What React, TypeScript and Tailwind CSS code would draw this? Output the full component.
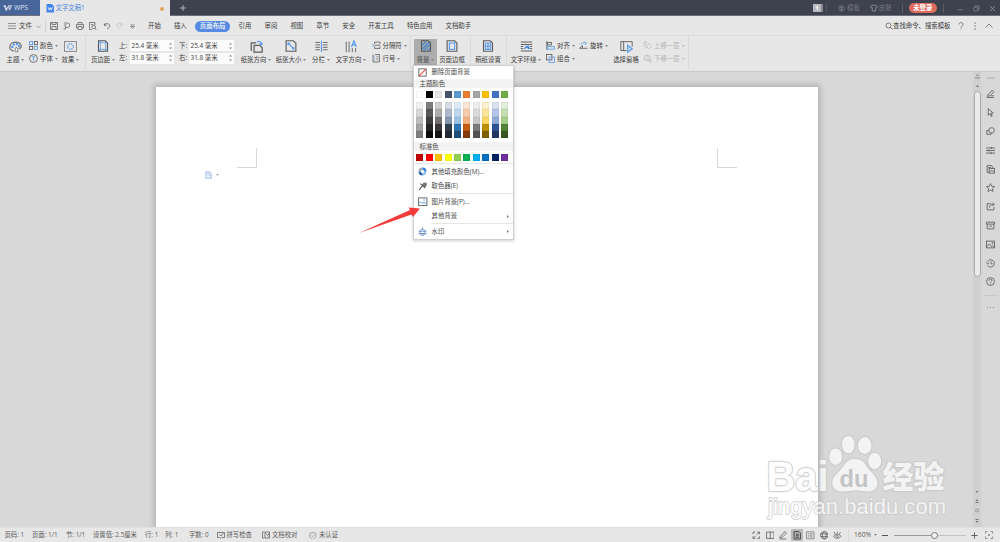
import React from "react";

type IconProps = { className?: string; children: React.ReactNode };

const Icon = ({ className = "size-[9px]", children }: IconProps) => (
  <svg viewBox="0 0 16 16" fill="none" stroke="#5c5c5c" strokeWidth="1.5" className={`shrink-0 ${className}`}>
    {children}
  </svg>
);

const BLUE = "#5b9bea";

const Caret = ({ className = "text-[#888]" }: { className?: string }) => (
  <svg viewBox="0 0 6 4" className={`ml-[2px] h-[2px] w-[3px] shrink-0 ${className}`}>
    <path d="M0 0H6L3 4Z" fill="currentColor" />
  </svg>
);

const Sep = ({ className = "" }: { className?: string }) => (
  <div className={`h-[34px] w-px shrink-0 bg-[#dadada] ${className}`} />
);

type BigProps = { label: string; caret?: boolean; className: string; children: React.ReactNode };

const Big = ({ label, caret, className, children }: BigProps) => (
  <div className={`flex h-[27px] shrink-0 flex-col items-center justify-between pt-px ${className}`}>
    {children}
    <div className="flex h-[11px] items-center">
      {label}
      {caret && <Caret />}
    </div>
  </div>
);

type SmallProps = { label: string; className?: string; children: React.ReactNode };

const Small = ({ label, className = "", children }: SmallProps) => (
  <div className={`flex h-[13px] items-center ${className}`}>
    {children}
    <span className="ml-[2px] pt-[0.500px]">{label}</span>
    <Caret className={className ? "text-[#bbb]" : "text-[#888]"} />
  </div>
);

const Margin = ({ label, value, narrow }: { label: string; value: string; narrow?: boolean }) => (
  <div className="flex h-[12px] items-center justify-between">
    <span>{label}</span>
    <div
      className={`flex h-[11px] items-center justify-between bg-[#fbfbfb] pr-[2px] pl-[1.500px] ${narrow ? "w-[44px]" : "w-[45px]"}`}
    >
      <span>{value}</span>
      <svg viewBox="0 0 4 10" className="h-[8px] w-[3px]" fill="#888">
        <path d="M0 3L2 0.6L4 3ZM0 7L2 9.4L4 7Z" />
      </svg>
    </div>
  </div>
);

const themeTop = ["#ffffff", "#000000", "#e7e6e6", "#44546a", "#5b9bd5", "#ed7d31", "#a5a5a5", "#ffc000", "#4472c4", "#70ad47"];
const themeShades = [
  ["#f2f2f2", "#7f7f7f", "#d0cece", "#d6dce4", "#deebf6", "#fbe5d5", "#ededed", "#fff2cc", "#d9e2f3", "#e2efd9"],
  ["#d8d8d8", "#595959", "#aeabab", "#adb9ca", "#bdd7ee", "#f7cbac", "#dbdbdb", "#fee599", "#b4c6e7", "#c5e0b3"],
  ["#bfbfbf", "#3f3f3f", "#757070", "#8496b0", "#9cc3e5", "#f4b183", "#c9c9c9", "#ffd965", "#8eaadb", "#a8d08d"],
  ["#a5a5a5", "#262626", "#3a3838", "#323f4f", "#2e75b5", "#c55a11", "#7b7b7b", "#bf9000", "#2f5496", "#538135"],
  ["#7f7f7f", "#0c0c0c", "#171616", "#222a35", "#1e4e79", "#833c0b", "#525252", "#7f6000", "#1f3864", "#375623"],
];
const standard = ["#c00000", "#ff0000", "#ffc000", "#ffff00", "#92d050", "#00b050", "#00b0f0", "#0070c0", "#002060", "#7030a0"];

const Swatches = ({ colors, className }: { colors: string[]; className: string }) => (
  <div className={`flex gap-[2.4px] pl-[2.400px] ${className}`}>
    {colors.map((c, i) => (
      <div
        key={i}
        className="w-[7px] shrink-0 border border-black/5"
        style={{ backgroundColor: c }}
      />
    ))}
  </div>
);

const MenuItem = ({ label, arrow, className, children }: { label: string; arrow?: boolean; className: string; children?: React.ReactNode }) => (
  <div className={`flex shrink-0 items-center pr-[4px] pl-[4px] ${className}`}>
    <div className="flex w-[13.500px] items-center">{children}</div>
    <span className="grow">{label}</span>
    {arrow && (
      <svg viewBox="0 0 4 6" className="h-[3px] w-[2px]">
        <path d="M0 0L4 3L0 6Z" fill="#777" />
      </svg>
    )}
  </div>
);

const BackgroundMenu = () => (
  <div className="absolute top-[65px] left-[413px] flex h-[174.500px] w-[101px] flex-col border border-[#cfcfcf] bg-white text-[6.400px] text-[#444] shadow-[0_1px_3px_rgba(0,0,0,0.2)]">
    <MenuItem label="删除页面背景" className="h-[13px]">
      <Icon className="size-[9px]">
        <rect x="1.5" y="1.5" width="13" height="13" stroke="#555" />
        <path d="M2 14L14 2" stroke="#e0483c" strokeWidth="1.8" />
      </Icon>
    </MenuItem>
    <div className="flex h-[9px] shrink-0 items-center bg-[#f3f3f3] pt-px pl-[5.500px]">主题颜色</div>
    <Swatches colors={themeTop} className="mt-[3px] h-[7px] shrink-0" />
    <div className="mt-[4px] flex shrink-0 flex-col">
      {themeShades.map((row, i) => (
        <Swatches key={i} colors={row} className="h-[7.3px]" />
      ))}
    </div>
    <div className="mt-[4px] flex h-[9px] shrink-0 items-center bg-[#f3f3f3] pt-px pl-[5.500px]">标准色</div>
    <Swatches colors={standard} className="mt-[2.500px] h-[7px] shrink-0" />
    <div className="mt-[2.5px] h-px shrink-0 bg-[#e6e6e6]" />
    <MenuItem label="其他填充颜色(M)..." className="h-[15px]">
      <Icon className="size-[9px]">
        <path d="M8 3A5 5 0 0 1 13 8" stroke="#2f7de0" strokeWidth="4" />
        <path d="M13 8A5 5 0 0 1 8 13" stroke="#8ec0f5" strokeWidth="4" />
        <path d="M8 13A5 5 0 0 1 3 8" stroke="#2b5fa8" strokeWidth="4" />
        <path d="M3 8A5 5 0 0 1 8 3" stroke="#9aa6b4" strokeWidth="4" />
      </Icon>
    </MenuItem>
    <MenuItem label="取色器(E)" className="h-[14px]">
      <Icon className="size-[9px]">
        <path d="M4 3L13 11M8 7L2 14" stroke="#555" strokeWidth="1.800" />
        <path d="M8 5L10 2H14.500V6L12 9Z" fill="#777" />
      </Icon>
    </MenuItem>
    <div className="ml-[17px] h-px shrink-0 bg-[#e6e6e6]" />
    <MenuItem label="图片背景(P)..." className="h-[15px]">
      <Icon className="size-[9.5px]">
        <rect x="1" y="1.500" width="14" height="13" />
        <path d="M1 11L4.500 8L7 11L10 8.500L12 11L15 9" stroke={BLUE} strokeWidth="1.5" />
        <path d="M9 5H12" stroke={BLUE} strokeWidth="1.600" />
      </Icon>
    </MenuItem>
    <MenuItem label="其他背景" arrow className="h-[14px]" />
    <div className="ml-[17px] h-px shrink-0 bg-[#e6e6e6]" />
    <MenuItem label="水印" arrow className="h-[15px]">
      <Icon className="size-[9px]">
        <path d="M3.500 12V7.500C3.500 3.500 12.500 3.500 12.500 7.500V12ZM8 1V4.500" stroke="#5d87c0" />
        <path d="M1 7.500H15M1 12H15M5 14.500H11" stroke="#5d87c0" />
      </Icon>
    </MenuItem>
  </div>
);

const TitleBar = () => (
  <div className="flex h-[16px] shrink-0 items-stretch border-b border-[#6d6f7a] bg-[#3e414e] text-[6.4px]">
    <div className="flex w-[40px] items-center gap-[2px] bg-[#476599] pt-px pl-[3px] text-[#dfe6f2]">
      <svg viewBox="0 0 18 12" className="h-[6px] w-[9px]" fill="none" stroke="#e8eef8" strokeWidth="1.8">
        <path d="M1 1.500H5L7 10L11 2L13 10L17 1.500H11M3 2L6 10.500H8" />
      </svg>
      <span className="text-[6.8px]">WPS</span>
    </div>
    <div className="-mb-px flex w-[130px] items-center bg-[#e7e7e7] pt-px pl-[5.500px] text-[#4a86e0]">
      <svg viewBox="0 0 16 16" className="size-[8.500px]">
        <path d="M1 0H11L15 4V16H1Z" fill="#4285f0" />
        <path d="M4 6L6 11.500L8 7L10 11.500L12 6" fill="none" stroke="#fff" strokeWidth="1.400" />
      </svg>
      <span className="ml-[1.500px] grow">文字文稿1</span>
      <span className="mr-[6px] size-[4px] rounded-full bg-[#e2a35a]" />
    </div>
    <div className="flex w-[25px] items-center justify-center">
      <Icon className="size-[8px]"><path d="M8 2V14M2 8H14" stroke="#c8c9ce" strokeWidth="1.600" /></Icon>
    </div>
    <div className="grow" />
    <div className="flex w-[187px] items-center pt-px text-[#757884]">
      <div className="flex h-[8px] w-[10px] items-center justify-center border-r-2 border-[#858792] bg-[#b9babf] text-[6px] font-bold text-white">1</div>
      <div className="ml-[3px] h-[8px] w-px bg-[#555864]" />
      <Icon className="ml-[11px] size-[7px]">
        <circle cx="8" cy="8" r="6.500" stroke="#858792" />
        <path d="M4 6H12M4 10H12M8 3V13" stroke="#858792" />
      </Icon>
      <span className="ml-[2px]">模板</span>
      <Icon className="ml-[10px] size-[8px]">
        <path d="M5 2L1 5L3 8L4.500 7V14H11.500V7L13 8L15 5L11 2Q8 5 5 2Z" stroke="#9a9ca5" />
      </Icon>
      <span className="ml-[1px]">皮肤</span>
      <div className="ml-[10px] h-[9px] w-px bg-[#5a5d68]" />
      <div className="ml-[6px] flex h-[10.500px] w-[28.500px] items-center justify-center rounded-full bg-[#df6b5e] text-[6.400px] font-bold text-white">未登录</div>
      <div className="ml-[6px] h-[9px] w-px bg-[#5a5d68]" />
      <Icon className="ml-[13px] size-[7px]"><path d="M2 11H14" stroke="#90929b" /></Icon>
      <Icon className="ml-[9px] size-[7px]">
        <rect x="1.500" y="5" width="9" height="9" rx="1.500" stroke="#90929b" />
        <path d="M5 5V2H14V11H11" stroke="#90929b" />
      </Icon>
      <Icon className="ml-[9px] size-[7px]"><path d="M2 2L14 14M14 2L2 14" stroke="#a9abb2" /></Icon>
    </div>
  </div>
);

const MenuBar = () => (
  <div className="flex h-[20px] shrink-0 items-center border-b border-[#dddddd] pt-px text-[6.400px]">
    <div className="flex w-[148px] items-center pl-[8px]">
      <Icon className="size-[8px]"><path d="M0 3H16M0 8H16M0 13H16" stroke="#777" /></Icon>
      <span className="ml-[3px]">文件</span>
      <Icon className="ml-[4px] size-[5px]"><path d="M1 5L8 12L15 5" stroke="#777" strokeWidth="2.200" /></Icon>
      <div className="ml-[4px] h-[12px] w-px bg-[#d2d2d2]" />
      <Icon className="ml-[4.500px] size-[8px]">
        <path d="M1 1H15V15H1ZM4 1V5H12V1M4 15V9H12V15" />
      </Icon>
      <Icon className="ml-[5px] size-[8px]">
        <path d="M2 2H9A4.500 4.500 0 0 1 9 11H6M2 6H7M5 8V14H1" />
      </Icon>
      <Icon className="ml-[5px] size-[8px]">
        <path d="M4 5V1H12V5M4 12H1V5H15V12H12M4 9H12V15H4Z" />
      </Icon>
      <Icon className="ml-[5px] size-[8px]">
        <path d="M6 15H1V1H12V6M4 5H8" />
        <circle cx="9.500" cy="10" r="3.500" />
        <path d="M12 13L15 15.500" />
      </Icon>
      <Icon className="ml-[5.500px] size-[8px]">
        <path d="M5 2L2 6L7 8M2 6C7 2 14 3 13.500 8C13 11 11 12 8 14" />
      </Icon>
      <Icon className="ml-[5px] size-[7.500px]">
        <path d="M11 2L14 6L9 8M14 6C9 2 2 3 2.500 8C3 11 5 12 8 14" stroke="#c2c2c2" />
      </Icon>
      <Icon className="ml-[7px] size-[5px]"><path d="M1 3H15M2 8L8 14L14 8Z" strokeWidth="2" /></Icon>
    </div>
    <div className="flex items-center gap-[13.150px]">
      <span>开始</span>
      <span>插入</span>
      <span className="-mx-[5px] flex h-[11px] w-[35.600px] items-center justify-center rounded-full bg-[#5589e2] font-medium text-white">页面布局</span>
      <span>引用</span>
      <span>审阅</span>
      <span>视图</span>
      <span>章节</span>
      <span>安全</span>
      <span>开发工具</span>
      <span>特色应用</span>
      <span>文档助手</span>
    </div>
    <div className="grow" />
    <div className="flex w-[115px] items-center">
      <Icon className="size-[8px]">
        <circle cx="7" cy="7" r="5" />
        <path d="M10.500 10.500L15 15" strokeWidth="1.800" />
      </Icon>
      <span className="w-[57px] shrink-0 whitespace-nowrap">查找命令、搜索模板</span>
      <Icon className="ml-[7px] size-[8px]">
        <path d="M4 5C4 0 12 0 12 5C12 8 8 8 8 11.500M8 13.500V15" />
      </Icon>
      <svg viewBox="0 0 4 16" className="ml-[9px] h-[8px] w-[2px]" fill="#777">
        <circle cx="2" cy="2" r="1.500" /><circle cx="2" cy="8" r="1.500" /><circle cx="2" cy="14" r="1.500" />
      </svg>
      <Icon className="ml-[9px] size-[8px]"><path d="M1 11L8 4L15 11" /></Icon>
    </div>
  </div>
);

const Ribbon = () => (
  <div className="flex h-[36px] shrink-0 items-start border-b border-[#c9c9c9] pt-[1.500px] pl-[3px] text-[6.400px]">
    <div className="flex items-center pt-[1px]">
      <Big label="主题" caret className="w-[25px]">
        <Icon className="size-[13px]">
          <path d="M6 13.500C-1.500 13 -0.500 3 8 2.500C15.500 2.500 17.500 10 12 10.500" stroke="#777" />
          <path d="M9 8.500L11 11V14.500H7.500V11Z" stroke="#777" strokeWidth="1" />
          <circle cx="4" cy="8.500" r="0.800" stroke={BLUE} /><circle cx="6" cy="5.500" r="0.800" stroke={BLUE} />
          <circle cx="10" cy="5" r="0.800" stroke={BLUE} /><circle cx="12.500" cy="7.500" r="0.800" stroke={BLUE} />
        </Icon>
      </Big>
      <div className="ml-px flex w-[31px] flex-col">
        <Small label="颜色">
          <Icon>
            <rect x="1" y="1" width="5.500" height="5.500" stroke={BLUE} />
            <rect x="9.500" y="1" width="5.500" height="5.500" /><rect x="1" y="9.500" width="5.500" height="5.500" />
            <rect x="9.500" y="9.500" width="5.500" height="5.500" stroke={BLUE} />
          </Icon>
        </Small>
        <Small label="字体">
          <Icon>
            <circle cx="8" cy="8" r="7" />
            <path d="M5 5H11M8 5V12" stroke={BLUE} strokeWidth="1.600" />
          </Icon>
        </Small>
      </div>
      <Big label="效果" caret className="w-[21px]">
        <Icon className="size-[13px]">
          <rect x="0.700" y="2" width="14.600" height="12" stroke="#777" strokeWidth="1" />
          <circle cx="8" cy="8" r="3.500" stroke={BLUE} strokeDasharray="1.500 1.250" strokeWidth="1.800" />
        </Icon>
      </Big>
      <Sep className="ml-[4px] -my-[4px]" />
      <Big label="页边距" caret className="ml-[4px] w-[26px]">
        <Icon className="size-[12px]">
          <path d="M2 1H11L14 4V15H2Z" stroke="#555" />
          <path d="M4.500 1V15M11.500 3V15M2 3.500H14M2 12.500H14" stroke={BLUE} strokeWidth="1" />
        </Icon>
      </Big>
      <div className="ml-[3px] flex w-[55px] flex-col gap-[0.500px]">
        <Margin label="上:" value="25.4 毫米" narrow />
        <Margin label="左:" value="31.8 毫米" narrow />
      </div>
      <div className="ml-[5px] flex w-[55px] flex-col gap-[0.500px]">
        <Margin label="下:" value="25.4 毫米" />
        <Margin label="右:" value="31.8 毫米" />
      </div>
      <Big label="纸张方向" caret className="ml-[5px] w-[34px]">
        <Icon className="size-[13px]">
          <path d="M2.500 12.500H1.500V3.500H7.500M5 6.500H12L15 9.500V15H5Z" />
          <path d="M8.500 2.500C11 0.500 14 2 14 5M12 4L14 6L16 4" stroke={BLUE} />
        </Icon>
      </Big>
      <Big label="纸张大小" caret className="ml-px w-[34px]">
        <Icon className="size-[12px]">
          <path d="M1.500 1H11L14.500 4V15H1.500Z" />
          <path d="M4 4L12 12M4 6.500V4H6.500M12 9.500V12H9.500" stroke={BLUE} />
        </Icon>
      </Big>
      <Big label="分栏" caret className="ml-px w-[24px]">
        <Icon className="size-[13px]">
          <path d="M0.500 3H6M0.500 6H6M0.500 9H6M0.500 12H6M10 3H15.500M10 6H15.500M10 9H15.500M10 12H15.500" strokeWidth="1.100" />
          <path d="M8 1V15" stroke={BLUE} />
        </Icon>
      </Big>
      <Big label="文字方向" caret className="ml-px w-[34px]">
        <Icon className="size-[13px]">
          <path d="M1.500 2V15M5 2V15M9 10V15M13 10V15" strokeWidth="1.100" />
          <path d="M8 8.500L11 1L14 8.500M9 6H13" stroke={BLUE} />
        </Icon>
      </Big>
      <div className="ml-[4px] flex w-[35px] flex-col">
        <Small label="分隔符">
          <Icon className="size-[8.500px]">
            <path d="M5 6V2H15V6M5 10V14H15V10M5 8H15" />
            <path d="M0 5L3 8L0 11" stroke={BLUE} strokeWidth="1.600" />
          </Icon>
        </Small>
        <Small label="行号">
          <Icon className="size-[8.500px]">
            <path d="M6 1H14V15H2V1" />
            <path d="M4.500 3V13" stroke={BLUE} strokeDasharray="2 2" /><path d="M8 5H12M8 8H12M8 11H12" strokeWidth="1" />
          </Icon>
        </Small>
      </div>
      <Sep className="ml-[3px] -my-[4px]" />
      <Big label="背景" caret className="ml-[3px] w-[23px] bg-[#adadad]">
        <Icon className="size-[12px]">
          <path d="M2 1H11L14 4V15H2Z" stroke="#555" />
          <path d="M3 7L8 2M3 12L12 3M5 14L13.500 5.500M10 14L13.500 10.500" stroke="#3f80cc" />
        </Icon>
      </Big>
      <Big label="页面边框" className="ml-[1px] w-[28px]">
        <Icon className="size-[12px]">
          <path d="M1.500 1H11.500L14.500 4V15H1.500Z" />
          <rect x="4.500" y="4" width="7" height="8.500" stroke={BLUE} />
        </Icon>
      </Big>
      <Sep className="ml-[4px] -my-[4px]" />
      <Big label="稿纸设置" className="ml-[3px] w-[28px]">
        <Icon className="size-[12px]">
          <path d="M2 1H11L14 4V15H2Z" />
          <path d="M4.500 4H11.500V12.500H4.500ZM4.500 8.200H11.500M8 4V12.500" stroke={BLUE} />
        </Icon>
      </Big>
      <Sep className="ml-[4px] -my-[4px]" />
      <Big label="文字环绕" caret className="ml-[2px] w-[34px]">
        <Icon className="size-[13px]">
          <path d="M1 2.500H15M1 13.500H15M1 5.500H15M1 8H4M1 10.500H4M12.500 8H15M12.500 10.500H15" strokeWidth="1.200" />
          <path d="M5.500 11L8 8L10 10V7L11.500 11" stroke="#3f86e0" />
        </Icon>
      </Big>
      <div className="ml-[3px] flex w-[30px] flex-col">
        <Small label="对齐">
          <Icon>
            <path d="M1.500 0V16" /><rect x="2.500" y="2.500" width="7" height="4.500" />
            <rect x="2.500" y="10" width="12.500" height="4.500" stroke={BLUE} />
          </Icon>
        </Small>
        <Small label="组合">
          <Icon>
            <rect x="1" y="1" width="9.500" height="9.500" />
            <rect x="5.500" y="5.500" width="9.500" height="9.500" stroke={BLUE} />
          </Icon>
        </Small>
      </div>
      <div className="ml-[3px] flex h-[26px] w-[30px] flex-col">
        <Small label="旋转">
          <Icon>
            <path d="M1 13L6 8V13ZM6 13H15" />
            <path d="M3 7C4 3 8 2 13 4M10 1L13.500 4L10.500 7" stroke={BLUE} />
          </Icon>
        </Small>
      </div>
      <Big label="选择窗格" className="ml-[3px] w-[28px]">
        <Icon className="size-[13px]">
          <path d="M8 13H1V2H15V8M4.500 2V13" strokeWidth="1.100" />
          <path d="M9.500 6.500V15L15 11Z" stroke={BLUE} fill="#cfe2fa" />
        </Icon>
      </Big>
      <div className="ml-[3px] flex w-[42px] flex-col">
        <Small label="上移一层" className="text-[#b3b3b3]">
          <Icon><path d="M7 1L1 4L7 8L13 4M1 8L7 12L9 11M10 14C15 13 15 9 12 8M3 1L7 4" stroke="#bdbdbd" /></Icon>
        </Small>
        <Small label="下移一层" className="text-[#b3b3b3]">
          <Icon><circle cx="7" cy="7" r="5" stroke="#bdbdbd" /><path d="M3 10L9 4M8 10H14V15M10 12L14 15" stroke="#bdbdbd" /></Icon>
        </Small>
      </div>
      <Sep className="ml-[3px] -my-[4px]" />
    </div>
  </div>
);

const sideIcons: React.ReactNode[] = [
  <path d="M3 11L11 2L14 5L7 12L2.500 13ZM1 15H14M9 12H14" />,
  <path d="M4 1L13 9H9L11 14L9 15L7 10L4 13Z" />,
  <><rect x="5.500" y="1.500" width="9" height="9" rx="3" /><path d="M5 6H1.500V13H9V10.500" /></>,
  <path d="M0 3.500H16M0 8H16M0 12.500H16M10 1.500V5.500M5 6V10M9 10.500V14.500" />,
  <><path d="M5 13H2V1H10L12 4V5M4 4.500H9" /><rect x="5.500" y="6" width="9.500" height="8.500" /><path d="M6 13L10 9L14 13" /></>,
  <path d="M8 1L10.200 5.700L15.200 6.300L11.500 9.800L12.500 15L8 12.400L3.500 15L4.500 9.800L0.800 6.300L5.800 5.700Z" />,
  <path d="M9 3H2V14H14V9M6 10C6 6 9 4 14 4M11.500 1L14.500 4L11.500 7" />,
  <path d="M1 2H15V5.500H1ZM2 5.500V14H14V5.500M5.500 9H10.500" />,
  <><rect x="1" y="2" width="14" height="12" /><path d="M1 12L6 7L10 12L12 10L15 13" /><circle cx="11.500" cy="5.500" r="1" /></>,
  <path d="M2.500 5A6.500 6.500 0 1 1 3 11.500M0.500 6L2.500 9L5.500 7M9 4V8.500H12" />,
  <><circle cx="8" cy="8" r="7" /><path d="M5.500 6.500C5.500 3 10.500 3 10.500 6C10.500 8 8 8 8 10M8 11.500V12.800" /></>,
];

const WorkArea = () => (
  <div className="flex h-[455px] shrink-0 overflow-hidden bg-[#d8d8d8] pl-[156px]">
    <div className="mt-[15px] flex w-[662px] shrink-0 flex-col bg-white pt-[61px] shadow-[0_0_6px_2px_rgba(0,0,0,0.2)]">
      <div className="flex justify-between px-[81px]">
        <div className="h-[20px] w-[19.500px] border-r border-b border-[#d9d9d9]" />
        <div className="h-[20px] w-[20px] border-b border-l border-[#d9d9d9]" />
      </div>
      <div className="mt-[3px] flex items-center pl-[49px]">
        <svg viewBox="0 0 14 16" className="h-[8px] w-[7px]">
          <path d="M0.500 0.500H9L13.500 5V15.500H0.500Z" fill="#c9d8f2" stroke="#a9c0ea" />
          <path d="M3 8H8M3 11H10" stroke="#fff" strokeWidth="1.500" />
        </svg>
        <Caret className="ml-[4px] text-[#aaa]" />
      </div>
    </div>
    <div className="grow" />
    <div className="flex w-[8px] shrink-0 flex-col items-center bg-[#d0d0d0]">
      <svg viewBox="0 0 8 8" className="mt-[2px] size-[5px]" fill="#999"><path d="M0 5H8V7H0ZM4 0L7 3H1Z" /></svg>
      <svg viewBox="0 0 6 4" className="mt-[6px] h-[2px] w-[3px]" fill="#777"><path d="M0 4H6L3 0Z" /></svg>
      <div className="mt-[4px] h-[186px] w-[7px] rounded-full border border-[#aaa] bg-[#ebebeb]" />
      <div className="grow" />
      <svg viewBox="0 0 6 36" className="mb-[2px] h-[36px] w-[6px]" fill="#777">
        <path d="M1.500 2H4.500L3 4ZM1.500 12L3 10L4.500 12ZM1.500 13H4.500V14H1.500ZM1.500 30H4.500V31H1.500ZM1.500 32H4.500L3 34Z" />
        <circle cx="3" cy="21.500" r="1.500" fill="none" stroke="#888" strokeWidth="0.700" />
      </svg>
    </div>
    <div className="flex w-[19px] shrink-0 flex-col items-center pt-[5px]">
      <div className="h-[2px] w-[8px] rounded-full bg-[#c2c2c2]" />
      <div className="mt-[5.500px] flex flex-col">
        {sideIcons.map((icon, i) => (
          <div key={i} className="flex h-[18.800px] items-center">
            <Icon className="size-[9px]">{icon}</Icon>
          </div>
        ))}
      </div>
      <div className="mt-[3.500px] h-px w-[14px] bg-[#c8c8c8]" />
      <svg viewBox="0 0 14 2" className="mt-[11px] h-[1px] w-[7px]" fill="#888">
        <path d="M0 0H2V2H0ZM6 0H8V2H6ZM12 0H14V2H12Z" />
      </svg>
    </div>
  </div>
);

const viewIcons: React.ReactNode[] = [
  <path d="M6 2H2V6M10 2H14V6M6 14H2V10M10 14H14V10M9 7L14 2M7 9L2 14" />,
  <path d="M1 2H15V14H1ZM8 2V14" />,
  <path d="M2 11L11 1L14 4L6 12L1.500 13ZM1 15H14" />,
  <path d="M2 1H11L14 4V15H2ZM5 6H11M5 9H11M5 12H11" stroke="#333" />,
  <path d="M1 1.500H15V14.500H1ZM4 5H6M7.500 5H12M4 8H6M7.500 8H12M4 11H6M7.500 11H12" strokeWidth="1.200" />,
  <path d="M8 1A7 7 0 1 1 7.900 1ZM8 1C3 5 3 11 8 15C13 11 13 5 8 1ZM1.500 5.500H14.500M1.500 10.500H14.500" />,
  <path d="M1 10C4 5 12 5 15 10C12 15 4 15 1 10ZM8 8A2 2 0 1 1 7.900 8M8 5V1M4 6L2 2M12 6L14 2" />,
];

const StatusBar = () => (
  <div className="flex h-[15px] shrink-0 items-center border-t border-[#dedede] pt-[0.500px] pl-[4.500px] text-[6.350px] whitespace-nowrap text-[#5c5c5c]">
    <span className="w-[27.500px]">页码: 1</span>
    <span className="w-[34px]">页面: 1/1</span>
    <span className="w-[27px]">节: 1/1</span>
    <span className="w-[52px]">设置值: 2.5厘米</span>
    <span className="w-[20px]">行: 1</span>
    <span className="w-[24px]">列: 1</span>
    <span className="w-[27.500px]">字数: 0</span>
    <div className="flex w-[45.500px] items-center gap-[2px]">
      <Icon className="size-[8px]"><path d="M8 3H1V13H5L7 15L9 13H15V3ZM5 7L8 10L13 4" /></Icon>
      拼写检查
    </div>
    <div className="flex w-[47px] items-center gap-[2px]">
      <Icon className="size-[8px]"><path d="M5 2H1V14H5M6 2H15V14H6ZM8 5L13 11M13 5V8" /></Icon>
      文档校对
    </div>
    <div className="flex items-center gap-[2.500px]">
      <Icon className="size-[7.500px]"><path d="M8 1L14.500 3V9C14 12 11 14 8 15.500C5 14 2 12 1.500 9V3ZM5 7.500L7.500 10L11.500 6" stroke="#888" /></Icon>
      未认证
    </div>
    <div className="grow" />
    <div className="flex w-[249.500px] items-center">
      <div className="flex gap-[1.500px]">
        {viewIcons.map((icon, i) => (
          <div key={i} className={`flex size-[12px] items-center justify-center rounded-[1px] ${i === 3 ? "bg-[#b9b9b9]" : ""}`}>
            <Icon className="size-[8.500px]">{icon}</Icon>
          </div>
        ))}
      </div>
      <div className="ml-[4px] h-[12px] w-px bg-[#dadada]" />
      <span className="ml-[5.500px] w-[17px] text-[6.700px]">160%</span>
      <Caret className="ml-[3px] text-[#888]" />
      <div className="ml-[5px] h-px w-[6px] bg-[#555]" />
      <div className="ml-[5.500px] flex w-[72px] items-center">
        <div className="h-px w-[37.500px] bg-[#999]" />
        <div className="size-[7px] shrink-0 rounded-full border border-[#777] bg-[#f3f3f3]" />
        <div className="h-px grow bg-[#c4c4c4]" />
      </div>
      <Icon className="ml-[5.500px] size-[7px]"><path d="M8 1V15M1 8H15" stroke="#555" strokeWidth="2" /></Icon>
      <Icon className="ml-[6.500px] size-[8px]">
        <path d="M5 1H1V5M11 1H15V5M5 15H1V11M11 15H15V11M8 6V10M6 8H10" stroke="#777" />
      </Icon>
    </div>
  </div>
);

const Watermark = () => (
  <svg
    viewBox="0 0 190 90"
    className="pointer-events-none absolute top-[432px] left-[763px] h-[90px] w-[190px] opacity-75 [paint-order:stroke]"
    fill="#fdfdfd"
    stroke="#c8c8c8"
    strokeWidth="2.400"
    strokeLinejoin="round"
    fontFamily='"Liberation Sans", Arial, sans-serif'
  >
    <text x="3.500" y="58.500" fontSize="42" fontWeight="700" textLength="62" lengthAdjust="spacingAndGlyphs">Bai</text>
    <ellipse cx="72.700" cy="24.700" rx="6.500" ry="8.300" />
    <ellipse cx="85.300" cy="12.500" rx="6.300" ry="8.800" />
    <ellipse cx="101.700" cy="13.500" rx="6.700" ry="8.500" />
    <ellipse cx="111.700" cy="29" rx="6.500" ry="8.300" />
    <path d="M92 27C82 27 82 34 75.500 40C65 49 69 59.500 79 59.500C85 59.500 87 58.500 92 58.500C98 58.500 100 59.500 105 59.500C115.500 59.500 118 49 108.500 40C102 34 102 27 92 27Z" />
    <text x="76.500" y="54.500" fontSize="23" fontWeight="700" fill="#bebebe" stroke="none" textLength="29" lengthAdjust="spacingAndGlyphs">du</text>
    <text x="119.500" y="56" fontSize="31" fontWeight="900" fontFamily='"Noto Sans CJK SC", sans-serif'>经验</text>
    <text x="5" y="82" fontSize="22" strokeWidth="1.800" textLength="178">jingyan.baidu.com</text>
  </svg>
);

export default function App() {
  return (
    <div className="relative flex h-[542px] w-[1000px] flex-col overflow-hidden bg-[#e7e7e7] font-['Open_Sans','Noto_Sans_CJK_SC',sans-serif] leading-none text-[#3c3c3c] select-none">
      <TitleBar />
      <MenuBar />
      <Ribbon />
      <WorkArea />
      <StatusBar />
      <BackgroundMenu />
      <svg viewBox="0 0 64 30" className="pointer-events-none absolute top-[205px] left-[358px] h-[30px] w-[64px]">
        <path d="M1 28L52 5L50.500 2.500L62 3.500L55 12L53.500 9.500Z" fill="#f23c3c" />
      </svg>
      <Watermark />
    </div>
  );
}
